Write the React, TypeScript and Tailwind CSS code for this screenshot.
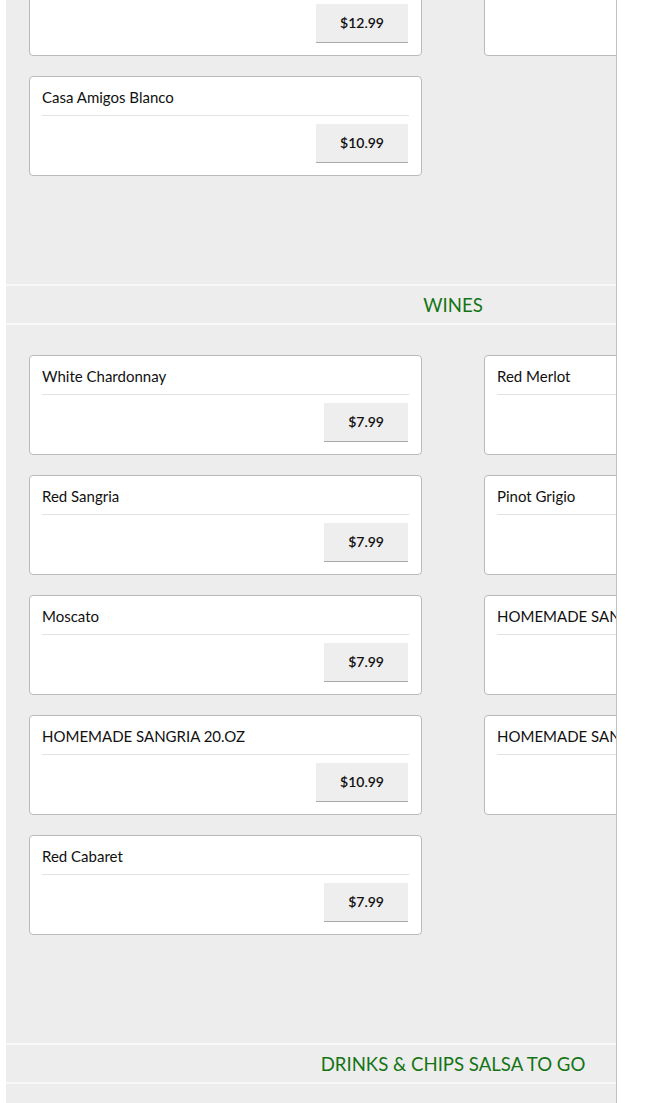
type Item = { name: string; price: string };

const tequila: Item[][] = [
  [
    { name: 'Casa Amigos Reposado', price: '$12.99' },
    { name: 'Don Julio Blanco', price: '$11.99' },
  ],
  [{ name: 'Casa Amigos Blanco', price: '$10.99' }],
];

const wines: Item[][] = [
  [
    { name: 'White Chardonnay', price: '$7.99' },
    { name: 'Red Merlot', price: '$7.99' },
  ],
  [
    { name: 'Red Sangria', price: '$7.99' },
    { name: 'Pinot Grigio', price: '$7.99' },
  ],
  [
    { name: 'Moscato', price: '$7.99' },
    { name: 'HOMEMADE SANGRIA 16.OZ', price: '$8.99' },
  ],
  [
    { name: 'HOMEMADE SANGRIA 20.OZ', price: '$10.99' },
    { name: 'HOMEMADE SANGRIA PITCHER', price: '$24.99' },
  ],
  [{ name: 'Red Cabaret', price: '$7.99' }],
];

function MenuCard({ item }: { item: Item }) {
  return (
    <div className="bg-white border border-[#bababa] rounded-[4px] px-[12px] pt-[11px] pb-[12px]">
      <div className="text-[15px] leading-[18px] text-[#111] pb-[9px] border-b border-[#e2e2e2] whitespace-nowrap">
        {item.name}
      </div>
      <div className="flex justify-end mt-[8px] mr-[1px]">
        <button className="h-[39px] px-[24px] pb-[2px] bg-[#eeeeee] border-b border-[#a9a9a9] text-[14px] font-semibold text-[#111]">
          {item.price}
        </button>
      </div>
    </div>
  );
}

function CardGrid({ rows }: { rows: Item[][] }) {
  return (
    <div className="flex flex-col gap-[20px] px-[23px]">
      {rows.map((row, i) => (
        <div key={i} className="grid grid-cols-[393px_393px] gap-x-[62px]">
          {row.map((item) => (
            <MenuCard key={item.name} item={item} />
          ))}
        </div>
      ))}
    </div>
  );
}

function SectionBand({ title }: { title: string }) {
  return (
    <div className="h-[41px] pt-[3px] border-y-2 border-[#f8f8f8] flex items-center justify-center text-[18.6px] text-[#147414]">
      {title}
    </div>
  );
}

export default function App() {
  return (
    <div className="min-h-screen bg-white pl-[6px]" style={{ fontFamily: 'Lato, "Open Sans", sans-serif' }}>
      <div className="w-[611px] h-[1103px] overflow-hidden bg-[#ededed] border-r border-[#c2c2c2]">
        <div className="w-[894px] -mt-[44px]">
          <CardGrid rows={tequila} />
          <div className="h-[108px]" />
          <SectionBand title="WINES" />
          <div className="h-[30px]" />
          <CardGrid rows={wines} />
          <div className="h-[108px]" />
          <SectionBand title="DRINKS & CHIPS SALSA TO GO" />
          <div className="h-[30px]" />
        </div>
      </div>
    </div>
  );
}
